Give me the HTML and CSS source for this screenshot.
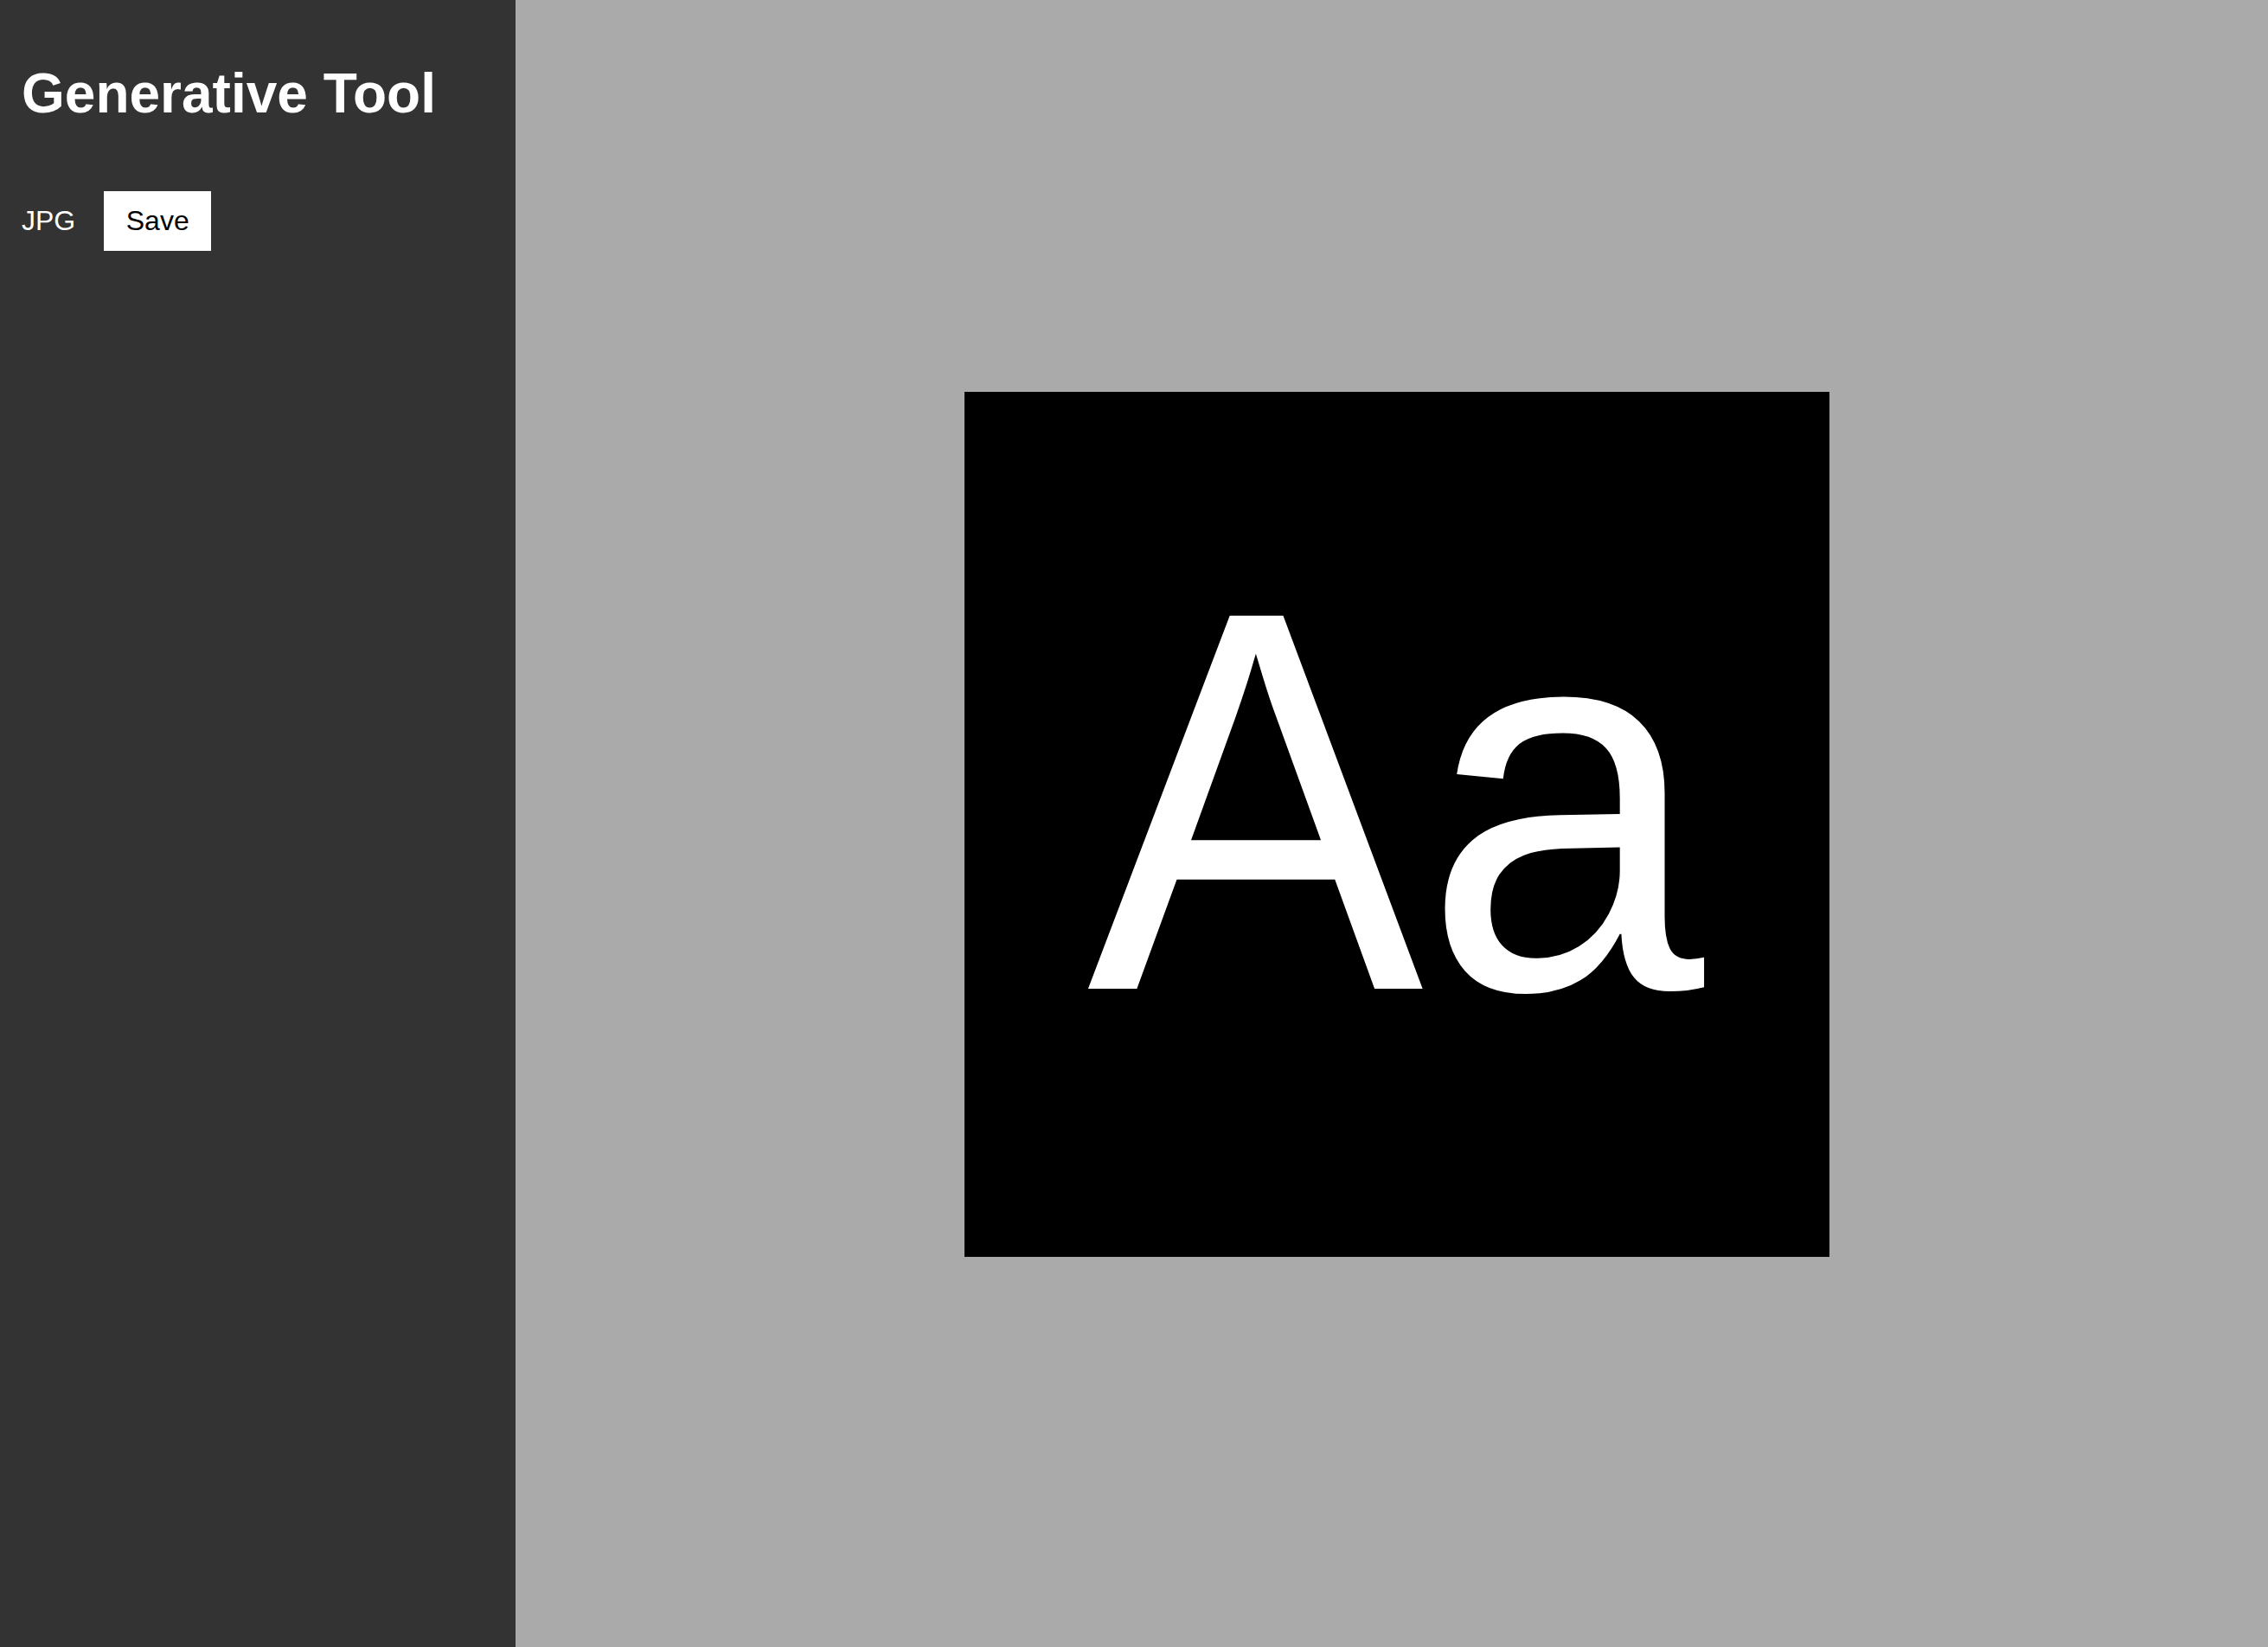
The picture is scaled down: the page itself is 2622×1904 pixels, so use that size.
FILE: index.html
```html
<!DOCTYPE html>
<html lang="en">
<head>
<meta charset="utf-8">
<title>Generative Tool</title>
<link rel="stylesheet" href="styles.css">
</head>
<body>
<div class="app">
  <aside class="sidebar">
    <h1 class="title">Generative Tool</h1>
    <div class="export-row">
      <span class="format">JPG</span>
      <button class="save-btn" type="button">Save</button>
    </div>
  </aside>
  <main class="stage">
    <div class="artboard">
      <div class="specimen"><span class="glyphs">Aa</span></div>
    </div>
  </main>
</div>
</body>
</html>
```

FILE: styles.css
```css
html, body {
  margin: 0;
  padding: 0;
  height: 100%;
}
body {
  font-family: "Liberation Sans", Arial, sans-serif;
  background: #aaaaaa;
  overflow: hidden;
}
.app {
  display: flex;
  height: 100vh;
}
.sidebar {
  width: 596px;
  flex: 0 0 596px;
  background: #333333;
  color: #ffffff;
  padding: 0 25px;
  box-sizing: border-box;
}
.title {
  margin: 71px 0 0 0;
  font-size: 64px;
  font-weight: bold;
  line-height: normal;
}
.export-row {
  margin-top: 76px;
  display: flex;
  align-items: center;
  gap: 33px;
}
.format {
  font-size: 32px;
  line-height: normal;
}
.save-btn {
  font-family: "Liberation Sans", Arial, sans-serif;
  font-size: 32px;
  line-height: normal;
  width: 124px;
  height: 69px;
  padding: 0;
  border: none;
  border-radius: 0;
  background: #ffffff;
  color: #000000;
}
.stage {
  flex: 1 1 auto;
  background: #aaaaaa;
  display: flex;
  align-items: center;
  justify-content: center;
  padding-left: 12px;
  padding-top: 1px;
}
.artboard {
  width: 1000px;
  height: 1000px;
  background: #000000;
  box-sizing: border-box;
  padding-top: 159px;
}
.specimen {
  font-family: "Liberation Sans", Arial, sans-serif;
  font-size: 627px;
  line-height: 1;
  color: #ffffff;
  text-align: center;
}
.glyphs {
  display: inline-block;
  transform: scaleX(0.93);
  transform-origin: center;
  margin-left: -3px;
}
```
